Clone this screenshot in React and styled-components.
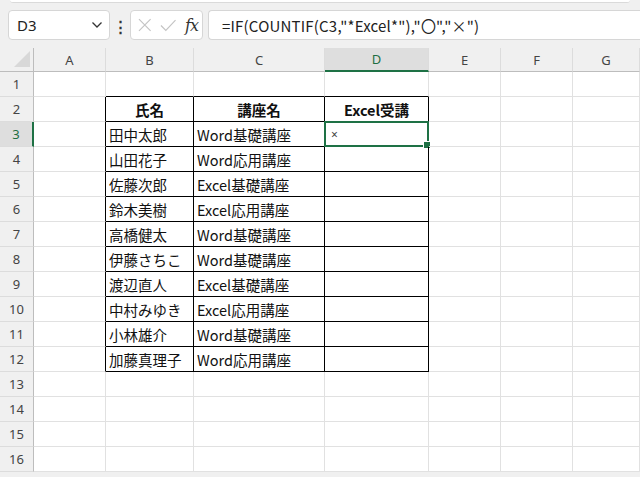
import React from 'react';
import styled, { createGlobalStyle, css } from 'styled-components';

const GlobalStyle = createGlobalStyle`
    html, body {
        margin: 0;
        padding: 0;
        background: #f0f0f0;
        overflow: hidden;
    }
    * {
        box-sizing: border-box;
    }
`;

const COLS = ['A', 'B', 'C', 'D', 'E', 'F', 'G'];
const WIDTHS = [72, 88, 131, 104, 72, 72];

const rows = [
    ['氏名', '講座名', 'Excel受講'],
    ['田中太郎', 'Word基礎講座', '×'],
    ['山田花子', 'Word応用講座', ''],
    ['佐藤次郎', 'Excel基礎講座', ''],
    ['鈴木美樹', 'Excel応用講座', ''],
    ['高橋健太', 'Word基礎講座', ''],
    ['伊藤さちこ', 'Word基礎講座', ''],
    ['渡辺直人', 'Excel基礎講座', ''],
    ['中村みゆき', 'Excel応用講座', ''],
    ['小林雄介', 'Word基礎講座', ''],
    ['加藤真理子', 'Word応用講座', ''],
];

const ChevronDown = () => (
    <svg width="12" height="8" viewBox="0 0 12 8">
        <path d="M1.5 1.5 L6 6 L10.5 1.5" fill="none" stroke="#333" strokeWidth="1.3" />
    </svg>
);

const CrossIcon = () => (
    <svg width="14" height="14" viewBox="0 0 14 14">
        <path d="M1 1 L13 13 M13 1 L1 13" fill="none" stroke="#c4c4c4" strokeWidth="1.2" />
    </svg>
);

const CheckIcon = () => (
    <svg width="17" height="13" viewBox="0 0 17 13">
        <path d="M1 6.5 L6 11.5 L16 1" fill="none" stroke="#c4c4c4" strokeWidth="1.2" />
    </svg>
);

const App = () => {
    const bodyRows = [];
    for (let r = 1; r <= 16; r++) {
        bodyRows.push(r);
    }

    const cellValue = (r, c) => {
        if (r < 2 || r > 12 || c < 1 || c > 3) return '';
        return rows[r - 2][c - 1];
    };

    return (
        <>
            <GlobalStyle />
            <Page>
                <RibbonEdge />
                <FormulaBar>
                    <NameBox>
                        <span>D3</span>
                        <ChevronDown />
                    </NameBox>
                    <Dots>⋮</Dots>
                    <FuncButtons>
                        <CrossIcon />
                        <CheckIcon />
                        <Fx>fx</Fx>
                    </FuncButtons>
                    <FormulaInput>=IF(COUNTIF(C3,"*Excel*"),"〇","×")</FormulaInput>
                </FormulaBar>
                <Sheet>
                    <Corner>
                        <CornerTriangle />
                    </Corner>
                    {COLS.map((col) => (
                        <ColHeader key={col} $active={col === 'D'}>
                            {col}
                        </ColHeader>
                    ))}
                    {bodyRows.map((r) => (
                        <React.Fragment key={r}>
                            <RowHeader $active={r === 3}>{r}</RowHeader>
                            {COLS.map((col, c) => {
                                const inTableRow = r >= 2 && r <= 12;
                                const rightBlack = inTableRow && c >= 0 && c <= 3;
                                const bottomBlack = c >= 1 && c <= 3 && r >= 1 && r <= 12;
                                const value = cellValue(r, c);
                                return (
                                    <Cell
                                        key={col}
                                        $rightBlack={rightBlack}
                                        $bottomBlack={bottomBlack}
                                        $head={r === 2 && value !== ''}
                                        $small={r === 3 && c === 3}
                                    >
                                        {value}
                                        {r === 3 && c === 3 && (
                                            <Selection>
                                                <FillHandle />
                                            </Selection>
                                        )}
                                    </Cell>
                                );
                            })}
                        </React.Fragment>
                    ))}
                </Sheet>
            </Page>
        </>
    );
};

export default App;

const Page = styled.div`
    width: 640px;
    height: 477px;
    overflow: hidden;
    background: #f0f0f0;
    font-family: "Noto Sans CJK JP", "Noto Sans", sans-serif;
`;

const RibbonEdge = styled.div`
    height: 3px;
    margin: 0 10px;
    background: #ffffff;
    border-bottom: 1px solid #dadada;
    border-radius: 0 0 4px 4px;
`;

const FormulaBar = styled.div`
    display: flex;
    align-items: center;
    height: 30px;
    margin: 7px 0 8px 8px;
`;

const Box = styled.div`
    height: 30px;
    background: #ffffff;
    border: 1px solid #d6d6d6;
    border-radius: 4px;
    display: flex;
    align-items: center;
`;

const NameBox = styled(Box)`
    width: 102px;
    padding: 0 6px 0 8px;
    justify-content: space-between;
    font-size: 15px;
    color: #222;
    font-family: "Noto Sans", "Noto Sans CJK JP", sans-serif;
`;

const Dots = styled.div`
    width: 20px;
    text-align: center;
    font-size: 15px;
    font-weight: 700;
    color: #333;
`;

const FuncButtons = styled(Box)`
    width: 73px;
    padding: 0 4px 0 7px;
    gap: 8px;
`;

const Fx = styled.span`
    font-family: "DejaVu Serif", "Liberation Serif", serif;
    font-style: italic;
    font-size: 16px;
    color: #333;
    margin-left: 1px;
    letter-spacing: -1px;
`;

const FormulaInput = styled(Box)`
    flex: 1;
    margin-left: 5px;
    padding-left: 13px;
    border-right: none;
    border-radius: 4px 0 0 4px;
    font-size: 15px;
    letter-spacing: 0.2px;
    color: #222;
    font-family: "Noto Sans CJK JP", sans-serif;
    white-space: nowrap;
`;

const Sheet = styled.div`
    display: grid;
    grid-template-columns: 34px ${WIDTHS.map((w) => `${w}px`).join(' ')} 1fr;
    grid-template-rows: 24px repeat(16, 25px);
    background: #ffffff;
`;

const headerBase = css`
    background: #f0f0f0;
    display: flex;
    align-items: center;
    justify-content: center;
    font-family: "Noto Sans", sans-serif;
    font-size: 13px;
    color: #444;
`;

const Corner = styled.div`
    ${headerBase};
    position: relative;
    border-right: 1px solid #bdbdbd;
    border-bottom: 1px solid #bdbdbd;
`;

const CornerTriangle = styled.div`
    position: absolute;
    right: 3px;
    bottom: 4px;
    width: 0;
    height: 0;
    border-left: 16px solid transparent;
    border-bottom: 16px solid #d8d8d8;
`;

const ColHeader = styled.div`
    ${headerBase};
    border-right: 1px solid #dcdcdc;
    border-bottom: 1px solid #bdbdbd;
    ${(p) =>
        p.$active &&
        css`
            background: #dedede;
            color: #1e6e42;
            border-bottom: 2px solid #1e7145;
        `}
`;

const RowHeader = styled.div`
    ${headerBase};
    border-right: 1px solid #bdbdbd;
    border-bottom: 1px solid #dcdcdc;
    ${(p) =>
        p.$active &&
        css`
            background: #dedede;
            color: #1e6e42;
            border-right: 2px solid #1e7145;
        `}
`;

const Cell = styled.div`
    position: relative;
    display: flex;
    align-items: center;
    padding-left: 3px;
    font-size: 14.5px;
    color: #111;
    white-space: nowrap;
    border-right: 1px solid ${(p) => (p.$rightBlack ? '#000' : '#e1e1e1')};
    border-bottom: 1px solid ${(p) => (p.$bottomBlack ? '#000' : '#e1e1e1')};
    ${(p) =>
        p.$head &&
        css`
            justify-content: center;
            font-weight: 700;
            padding-left: 0;
        `}
    ${(p) =>
        p.$small &&
        css`
            font-family: "Noto Sans", sans-serif;
            font-size: 12px;
            color: #444;
            padding-left: 6px;
        `}
`;

const Selection = styled.div`
    position: absolute;
    left: -1px;
    top: -1px;
    right: -1px;
    bottom: -1px;
    border: 2px solid #1e7145;
    pointer-events: none;
`;

const FillHandle = styled.div`
    position: absolute;
    right: -4px;
    bottom: -4px;
    width: 6px;
    height: 6px;
    background: #1e7145;
    border: 1px solid #ffffff;
    box-sizing: content-box;
`;
